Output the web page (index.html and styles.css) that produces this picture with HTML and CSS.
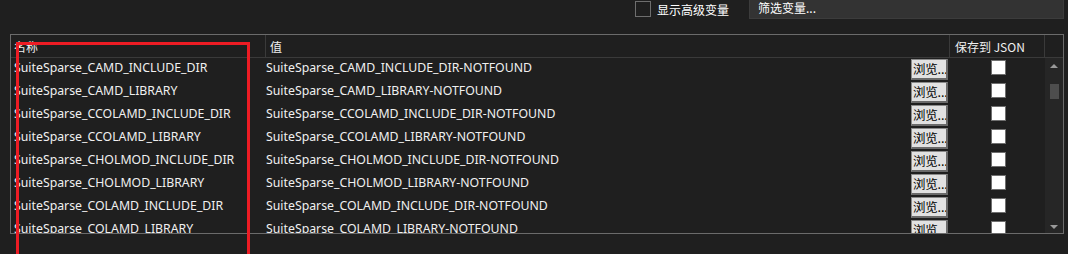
FILE: index.html
```html
<!DOCTYPE html>
<html>
<head>
<meta charset="utf-8">
<link rel="stylesheet" href="styles.css">
</head>
<body>
<div class="page">
  <div class="topbar">
    <label class="adv"><span class="cb"></span><span>显示高级变量</span></label>
    <div class="filter">筛选变量...</div>
  </div>
  <div class="table">
    <div class="header">
      <div class="hcell c-name">名称</div>
      <div class="hcell c-val">值</div>
      <div class="hcell c-save">保存到 JSON</div>
      <div class="hcell c-scroll"></div>
    </div>
    <div class="body">
      <div class="rows">
        <div class="row"><div class="c-name">SuiteSparse_CAMD_INCLUDE_DIR</div><div class="c-val"><span>SuiteSparse_CAMD_INCLUDE_DIR-NOTFOUND</span><span class="btn">浏览...</span></div><div class="c-save"><span class="box"></span></div></div>
        <div class="row"><div class="c-name">SuiteSparse_CAMD_LIBRARY</div><div class="c-val"><span>SuiteSparse_CAMD_LIBRARY-NOTFOUND</span><span class="btn">浏览...</span></div><div class="c-save"><span class="box"></span></div></div>
        <div class="row"><div class="c-name">SuiteSparse_CCOLAMD_INCLUDE_DIR</div><div class="c-val"><span>SuiteSparse_CCOLAMD_INCLUDE_DIR-NOTFOUND</span><span class="btn">浏览...</span></div><div class="c-save"><span class="box"></span></div></div>
        <div class="row"><div class="c-name">SuiteSparse_CCOLAMD_LIBRARY</div><div class="c-val"><span>SuiteSparse_CCOLAMD_LIBRARY-NOTFOUND</span><span class="btn">浏览...</span></div><div class="c-save"><span class="box"></span></div></div>
        <div class="row"><div class="c-name">SuiteSparse_CHOLMOD_INCLUDE_DIR</div><div class="c-val"><span>SuiteSparse_CHOLMOD_INCLUDE_DIR-NOTFOUND</span><span class="btn">浏览...</span></div><div class="c-save"><span class="box"></span></div></div>
        <div class="row"><div class="c-name">SuiteSparse_CHOLMOD_LIBRARY</div><div class="c-val"><span>SuiteSparse_CHOLMOD_LIBRARY-NOTFOUND</span><span class="btn">浏览...</span></div><div class="c-save"><span class="box"></span></div></div>
        <div class="row"><div class="c-name">SuiteSparse_COLAMD_INCLUDE_DIR</div><div class="c-val"><span>SuiteSparse_COLAMD_INCLUDE_DIR-NOTFOUND</span><span class="btn">浏览...</span></div><div class="c-save"><span class="box"></span></div></div>
        <div class="row"><div class="c-name">SuiteSparse_COLAMD_LIBRARY</div><div class="c-val"><span>SuiteSparse_COLAMD_LIBRARY-NOTFOUND</span><span class="btn">浏览...</span></div><div class="c-save"><span class="box"></span></div></div>
      </div>
      <div class="scrollbar">
        <span class="arrow up"></span>
        <span class="thumb"></span>
        <span class="spacer"></span>
        <span class="arrow down"></span>
      </div>
    </div>
  </div>
  <div class="highlight"></div>
</div>
</body>
</html>
```

FILE: styles.css
```css
html, body {
  margin: 0;
  padding: 0;
  background: #1f1f1f;
}
body {
  width: 1068px;
  height: 254px;
  overflow: hidden;
  font-family: "Noto Sans", "Noto Sans CJK SC", sans-serif;
  font-size: 12.3px;
  color: #f0f0f0;
}
.page {
  position: relative;
  width: 1068px;
  height: 254px;
  overflow: hidden;
  padding: 0 0 0 10px;
  box-sizing: border-box;
}
.topbar {
  display: flex;
  justify-content: flex-end;
  align-items: flex-start;
  height: 34px;
  padding-right: 4px;
}
.adv {
  display: flex;
  align-items: center;
  gap: 6px;
  height: 19px;
  margin-right: 20px;
  color: #ffffff;
  font-family: "Noto Sans CJK SC", sans-serif;
  font-size: 12px;
}
.cb {
  width: 14px;
  height: 14px;
  border: 1px solid #6e6e6e;
  box-sizing: content-box;
  margin-top: -1px;
}
.filter {
  width: 305px;
  height: 18px;
  background: #333333;
  border: 1px solid #3c3c3c;
  border-top: none;
  padding-left: 8px;
  line-height: 15px;
  color: #ffffff;
  font-family: "Noto Sans CJK SC", sans-serif;
  font-size: 12px;
}
.table {
  width: 1054px;
  height: 200px;
  border: 1px solid #6b6b6b;
  box-sizing: border-box;
  display: flex;
  flex-direction: column;
}
.header {
  display: grid;
  grid-template-columns: 255px 683px 96px 18px;
  height: 23px;
  border-bottom: 1px solid #3a3a3a;
  box-sizing: border-box;
}
.hcell {
  display: flex;
  align-items: center;
  padding-left: 3px;
  font-family: "Noto Sans CJK SC", sans-serif;
  font-size: 12px;
  color: #f0f0f0;
}
.header .c-name { border-right: 1px solid #3a3a3a; }
.header .c-val { padding-left: 4px; }
.header .c-save {
  border-left: 1px solid #3a3a3a;
  border-right: 1px solid #3a3a3a;
  padding-left: 5px;
}
.body {
  display: flex;
  flex: 1;
  overflow: hidden;
}
.rows {
  width: 1034px;
  overflow: hidden;
}
.row {
  display: grid;
  grid-template-columns: 255px 683px 96px;
  height: 23px;
  align-items: center;
}
.row .c-name {
  padding-left: 3px;
  white-space: nowrap;
  padding-bottom: 5px;
}
.row .c-val {
  display: flex;
  align-items: center;
  justify-content: space-between;
  padding-left: 0;
  white-space: nowrap;
}
.row .c-val > span:first-child { padding-bottom: 5px; }
.btn {
  width: 37px;
  height: 21px;
  box-sizing: border-box;
  background: #e1e1e1;
  border: 1px solid #7a7a7a;
  border-width: 1px 2px 2px 1px;
  border-color: #8a8a8a #6a6a6a #6a6a6a #8a8a8a;
  color: #000;
  font-family: "Noto Sans CJK SC", sans-serif;
  font-size: 12.5px;
  line-height: 17px;
  padding-left: 1px;
  overflow: hidden;
  margin-right: 1px;
  letter-spacing: -0.2px;
}
.row .c-save {
  display: flex;
  justify-content: center;
  align-items: center;
  padding-left: 2px;
  padding-bottom: 5px;
}
.box {
  width: 13px;
  height: 13px;
  background: #ffffff;
  border: 1px solid #6f6f6f;
}
.scrollbar {
  width: 18px;
  background: #262626;
  display: flex;
  flex-direction: column;
  align-items: center;
  padding: 6px 0 4px;
  box-sizing: border-box;
}
.arrow {
  width: 0;
  height: 0;
  border-left: 4px solid transparent;
  border-right: 4px solid transparent;
}
.arrow.up { border-bottom: 4px solid #9a9a9a; }
.arrow.down { border-top: 4px solid #9a9a9a; }
.thumb {
  width: 9px;
  height: 15px;
  background: #4d4d4d;
  margin-top: 16px;
}
.spacer { flex: 1; }
.highlight {
  position: absolute;
  left: 16px;
  top: 42px;
  width: 234px;
  height: 216px;
  border: 3px solid #ed1c24;
  border-bottom: none;
  box-sizing: border-box;
}
```
